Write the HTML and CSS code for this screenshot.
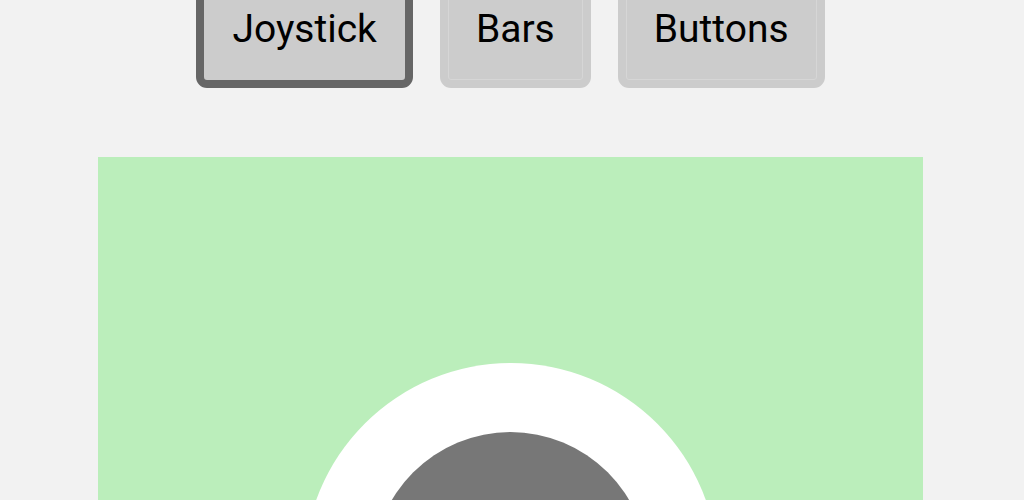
FILE: index.html
```html
<!DOCTYPE html>
<html>
<head>
<meta charset="utf-8">
<link rel="stylesheet" href="styles.css">
</head>
<body>
<nav class="tabs">
  <button class="tab active">Joystick</button>
  <button class="tab">Bars</button>
  <button class="tab">Buttons</button>
</nav>
<main class="pad">
  <div class="ring">
    <div class="knob"></div>
  </div>
</main>
</body>
</html>
```
FILE: styles.css
```css
html {
  background: #f2f2f2;
  overflow: hidden;
}
body {
  margin: 0;
  padding: 0;
  width: 1021px;
  background: #f2f2f2;
  font-family: Roboto, "Noto Sans", sans-serif;
}
.tabs {
  display: flex;
  justify-content: center;
  gap: 27px;
  margin-top: -32px;
}
.tab {
  box-sizing: border-box;
  height: 120px;
  padding: 2px 28px 0;
  border: 8px solid #cccccc;
  border-radius: 11px;
  background: #cccccc;
  box-shadow: inset 0 0 0 1px #d6d6d6;
  font-family: Roboto, "Noto Sans", sans-serif;
  font-size: 39px;
  color: #000;
  line-height: 1;
}
.tab.active {
  border-color: #666666;
  box-shadow: none;
}
.pad {
  width: 825px;
  height: 825px;
  margin: 69px auto 0;
  background: #bbeebb;
  display: flex;
  align-items: center;
  justify-content: center;
}
.ring {
  width: 414px;
  height: 414px;
  border-radius: 50%;
  background: #ffffff;
  display: flex;
  align-items: center;
  justify-content: center;
}
.knob {
  width: 275px;
  height: 275px;
  border-radius: 50%;
  background: #777777;
}
```
